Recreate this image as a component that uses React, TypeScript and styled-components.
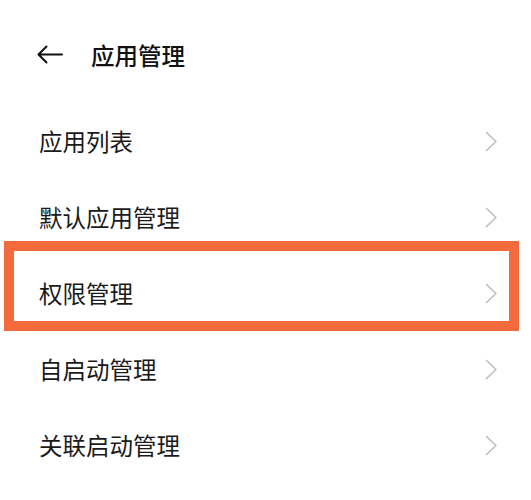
import React from 'react';
import styled, { createGlobalStyle } from 'styled-components';

const GlobalStyle = createGlobalStyle`
  body {
    margin: 0;
    background: #ffffff;
    font-family: "Noto Sans CJK SC", "Noto Sans", sans-serif;
  }
`

const Page = styled.div`
  width: 531px;
  height: 500px;
  position: relative;
  background: #ffffff;
  overflow: hidden;
`

const Header = styled.header`
  height: 103px;
  display: flex;
  align-items: flex-start;
  padding: 38px 0 0 37px;
  box-sizing: border-box;
  gap: 28px;
`

const BackButton = styled.button`
  border: none;
  background: none;
  padding: 0;
  margin-top: 6px;
  width: 26px;
  height: 20px;
  display: flex;
  align-items: center;
  color: #111;
`

const Title = styled.h1`
  margin: 0;
  font-size: 23.5px;
  line-height: 34px;
  font-weight: 500;
  color: #111;
`

const List = styled.ul`
  list-style: none;
  margin: 0;
  padding: 0;
`

const Row = styled.li<{ $highlight?: boolean }>`
  height: 76px;
  display: flex;
  align-items: center;
  justify-content: space-between;
  padding: 0 33px 0 39px;
  box-sizing: border-box;
  position: relative;
`

const Label = styled.span`
  font-size: 23.5px;
  color: #1a1a1a;
  letter-spacing: 0;
`

const Highlight = styled.div`
  position: absolute;
  left: 4px;
  right: 12px;
  top: -14px;
  bottom: 0;
  border: 10px solid #f36a3c;
  pointer-events: none;
`

const Chevron = () => (
  <svg width="13" height="21" viewBox="0 0 13 21" fill="none">
    <path d="M1.5 1.5 L11 10.5 L1.5 19.5" stroke="#bdbdbd" strokeWidth="1.6" strokeLinecap="round" strokeLinejoin="round" />
  </svg>
)

const items = ['应用列表', '默认应用管理', '权限管理', '自启动管理', '关联启动管理']

export default function App() {
  return (
    <Page>
      <GlobalStyle />
      <Header>
        <BackButton aria-label="返回">
          <svg width="26" height="19" viewBox="0 0 26 19" fill="none">
            <path d="M25 9.5 H2 M9.5 1.5 L1.5 9.5 L9.5 17.5" stroke="#111" strokeWidth="2" strokeLinecap="round" strokeLinejoin="round" />
          </svg>
        </BackButton>
        <Title>应用管理</Title>
      </Header>
      <List>
        {items.map((item) => (
          <Row key={item}>
            <Label>{item}</Label>
            <Chevron />
            {item === '权限管理' && <Highlight />}
          </Row>
        ))}
      </List>
    </Page>
  );
}
